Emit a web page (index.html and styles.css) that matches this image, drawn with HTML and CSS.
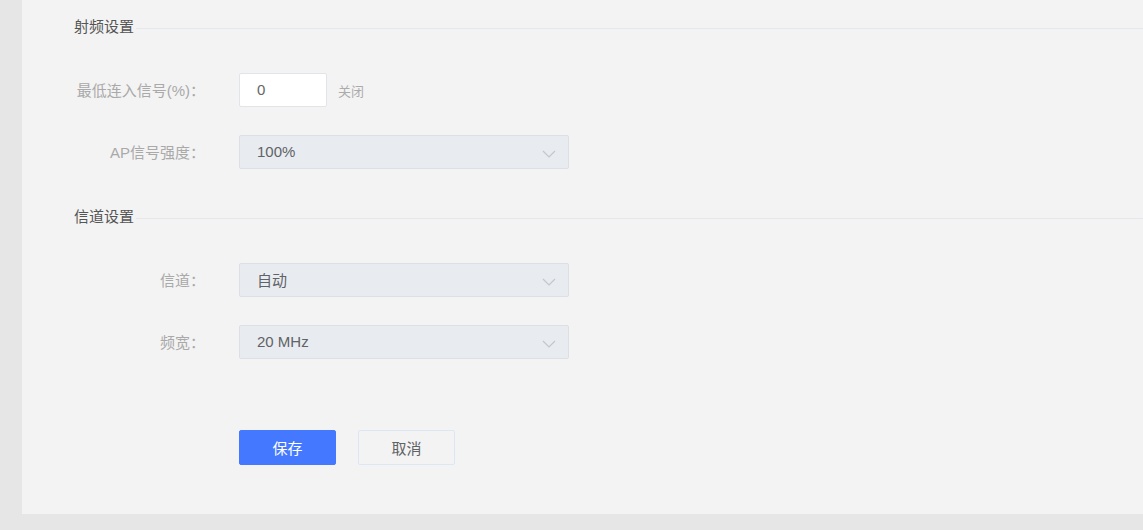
FILE: index.html
```html
<!DOCTYPE html>
<html lang="zh-CN">
<head>
<meta charset="utf-8">
<title>无线设置</title>
<link rel="stylesheet" href="styles.css">
</head>
<body>
<div class="page">
  <div class="panel">
    <div class="section-title"><span>射频设置</span></div>
    <div class="form-row first">
      <label class="label">最低连入信号(%)：</label>
      <div class="control">
        <input class="input" type="text" value="0">
        <span class="hint">关闭</span>
      </div>
    </div>
    <div class="form-row">
      <label class="label">AP信号强度：</label>
      <div class="control">
        <div class="select"><span>100%</span>
          <svg class="chev" width="14" height="8" viewBox="0 0 14 8"><polyline points="1,1 7,7 13,1" fill="none" stroke="#c3c7cd" stroke-width="1.2"/></svg>
        </div>
      </div>
    </div>

    <div class="section-title second"><span>信道设置</span></div>
    <div class="form-row first">
      <label class="label">信道：</label>
      <div class="control">
        <div class="select"><span>自动</span>
          <svg class="chev" width="14" height="8" viewBox="0 0 14 8"><polyline points="1,1 7,7 13,1" fill="none" stroke="#c3c7cd" stroke-width="1.2"/></svg>
        </div>
      </div>
    </div>
    <div class="form-row">
      <label class="label">频宽：</label>
      <div class="control">
        <div class="select"><span>20 MHz</span>
          <svg class="chev" width="14" height="8" viewBox="0 0 14 8"><polyline points="1,1 7,7 13,1" fill="none" stroke="#c3c7cd" stroke-width="1.2"/></svg>
        </div>
      </div>
    </div>

    <div class="actions">
      <button class="btn btn-primary">保存</button>
      <button class="btn btn-default">取消</button>
    </div>
  </div>
</div>
</body>
</html>
```

FILE: styles.css
```css
* { box-sizing: border-box; }
html, body { margin: 0; padding: 0; }
body {
  background: #e6e6e6;
  font-family: "Liberation Sans", "Noto Sans CJK SC", sans-serif;
  font-size: 15px;
  width: 1143px;
  height: 530px;
  overflow: hidden;
}
.page {
  padding-left: 22px;
  height: 530px;
}
.panel {
  background: #f3f3f3;
  height: 514px;
  padding: 17px 0 0 52px;
}
.section-title {
  display: flex;
  align-items: flex-start;
  height: 20px;
  line-height: 20px;
  color: #555;
  font-size: 15px;
}
.section-title::after {
  content: "";
  flex: 1;
  height: 1px;
  background: #e4e7ec;
  margin: 11px 0 0 2px;
}
.section-title.second { margin-top: 38px; }
.form-row {
  display: flex;
  align-items: center;
  height: 34px;
  margin-top: 28px;
}
.form-row.first { margin-top: 36px; }
.label {
  width: 131px;
  text-align: right;
  color: #a9a9a9;
  font-size: 15px;
  margin-right: 34px;
  white-space: nowrap;
  padding-bottom: 2px;
}
.control {
  display: flex;
  align-items: center;
}
.input {
  width: 88px;
  height: 34px;
  border: 1px solid #e1e5ea;
  border-radius: 2px;
  background: #fff;
  padding: 0 0 2px 17px;
  font-family: inherit;
  font-size: 15px;
  color: #666;
  outline: none;
}
.hint {
  margin-left: 11px;
  color: #ababab;
  font-size: 13px;
}
.select {
  width: 330px;
  height: 34px;
  border: 1px solid #dcdfe4;
  border-radius: 2px;
  background: #e8ecf0;
  display: flex;
  align-items: center;
  justify-content: space-between;
  padding: 0 12px 2px 17px;
  color: #606266;
  font-size: 15px;
}
.chev { margin-top: 5px; }
.actions {
  display: flex;
  gap: 22px;
  margin-top: 71px;
  padding-left: 165px;
}
.btn {
  width: 97px;
  height: 35px;
  border-radius: 2px;
  font-family: inherit;
  font-size: 15px;
  cursor: pointer;
}
.btn-primary {
  background: #4479ff;
  border: 1px solid #4479ff;
  color: #fff;
}
.btn-default {
  background: #f3f3f3;
  border: 1px solid #dde7f4;
  color: #606266;
}
```
